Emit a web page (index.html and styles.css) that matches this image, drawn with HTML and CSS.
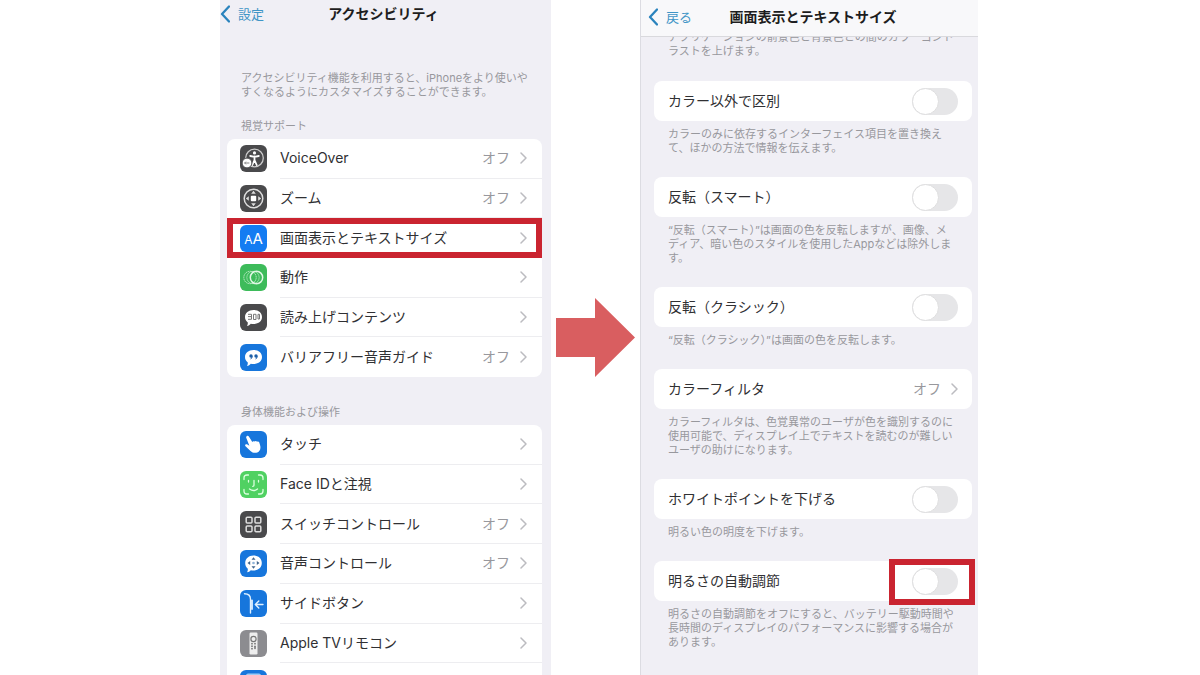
FILE: index.html
```html
<!DOCTYPE html>
<html lang="ja">
<head>
<meta charset="utf-8">
<meta name="viewport" content="width=device-width, initial-scale=1">
<title>アクセシビリティ</title>
<link rel="stylesheet" href="styles.css">
</head>
<body>
<svg class="defs" aria-hidden="true">
  <symbol id="chevron" viewBox="0 0 7 12"><path d="M1 1l5 5-5 5" fill="none" stroke="currentColor" stroke-width="1.500" stroke-linecap="round" stroke-linejoin="round"/></symbol>
  <symbol id="back" viewBox="0 0 10 18"><path d="M9 1.500L2 9l7 7.500" fill="none" stroke="currentColor" stroke-width="2.300" stroke-linecap="round" stroke-linejoin="round"/></symbol>
</svg>
<main class="guide">
  <section class="phone phone--menu">
    <header class="bar">
      <a class="back" href="#"><svg class="back__icon"><use href="#back"/></svg>設定</a>
      <h1 class="bar__title">アクセシビリティ</h1>
    </header>
    <p class="note note--intro">アクセシビリティ機能を利用すると、iPhoneをより使いや<br>すくなるようにカスタマイズすることができます。</p>

    <h2 class="heading">視覚サポート</h2>
    <nav class="list">
      <a class="row" href="#">
        <svg class="icon icon--dark" viewBox="0 0 27 27"><circle cx="14.500" cy="13" r="8.800" fill="none" stroke="#ccc" stroke-width="1.300"/><circle cx="14.500" cy="7.900" r="1.600" fill="#fff"/><path d="M10.200 11l4.300.8 4.300-.8M14.500 11.500v4M14.500 15l-2.200 5M14.500 15l2.200 5" fill="none" stroke="#fff" stroke-width="1.800" stroke-linecap="round"/><circle cx="7" cy="18" r="4.900" fill="#fff" stroke="#4a4a4c"/><path d="M4.600 18h4.800M5.900 16.700L4.600 18l1.300 1.300" fill="none" stroke="#888" stroke-width="1"/></svg>
        <span class="row__body"><span class="row__label">VoiceOver</span><span class="row__value">オフ</span><svg class="chevron"><use href="#chevron"/></svg></span>
      </a>
      <a class="row" href="#">
        <svg class="icon icon--dark" viewBox="0 0 27 27"><circle cx="13.500" cy="13.500" r="9.300" fill="none" stroke="#ddd" stroke-width="1.500"/><rect x="10.800" y="10.800" width="5.400" height="5.400" rx="1" fill="#fff"/><path d="M13.500 5.800l2.300 3h-4.600zM13.500 21.200l2.300-3h-4.600zM5.800 13.500l3-2.300v4.600zM21.200 13.500l-3-2.300v4.600z" fill="#ddd"/></svg>
        <span class="row__body"><span class="row__label">ズーム</span><span class="row__value">オフ</span><svg class="chevron"><use href="#chevron"/></svg></span>
      </a>
      <a class="row row--marked" href="#">
        <span class="icon icon--bright icon--letters" aria-hidden="true"><small class="icon__small">A</small>A</span>
        <span class="row__body"><span class="row__label">画面表示とテキストサイズ</span><svg class="chevron"><use href="#chevron"/></svg></span>
      </a>
      <a class="row" href="#">
        <svg class="icon icon--green" viewBox="0 0 27 27" fill="none" stroke="#dff7e4"><circle cx="10" cy="13.500" r="6.200" stroke-width=".8" stroke-dasharray="1.400 .6"/><circle cx="13" cy="13.500" r="6.200" stroke-width=".7" stroke-opacity=".7"/><circle cx="16.500" cy="13.500" r="6.200" stroke-width="1.500"/></svg>
        <span class="row__body"><span class="row__label">動作</span><svg class="chevron"><use href="#chevron"/></svg></span>
      </a>
      <a class="row" href="#">
        <svg class="icon icon--dark" viewBox="0 0 27 27"><path d="M13.500 6c5 0 8.500 2.900 8.500 7s-3.500 7-8.500 7c-1 0-1.900-.1-2.700-.3-1 1.300-2.200 2-3.800 2.300.7-1 .9-2 .8-3.600C6 17.200 5 15.300 5 13c0-4.100 3.500-7 8.500-7z" fill="#fff"/><path d="M8 10.300h3.500M8 12.600h3M8 15.300h3.500v-5M13.500 15.500v-5.200h2.500v5.200zM18 10.300h1.500v4.700H18z" fill="none" stroke="#777" stroke-width="1"/></svg>
        <span class="row__body"><span class="row__label">読み上げコンテンツ</span><svg class="chevron"><use href="#chevron"/></svg></span>
      </a>
      <a class="row" href="#">
        <svg class="icon icon--blue" viewBox="0 0 27 27"><path d="M13.500 6c5 0 8.500 2.900 8.500 7s-3.500 7-8.500 7c-1 0-1.900-.1-2.700-.3-1 1.300-2.200 2-3.800 2.300.7-1 .9-2 .8-3.600C6 17.200 5 15.300 5 13c0-4.100 3.500-7 8.500-7z" fill="#fff"/><g fill="#1c5fa8"><circle cx="11" cy="12" r="1.700"/><circle cx="16" cy="12" r="1.700"/><path d="M12.700 12q0 2.600-2 3.600l-.4-.7q1.200-.8 1.200-2.200zM17.700 12q0 2.600-2 3.600l-.4-.7q1.200-.8 1.200-2.200z"/></g></svg>
        <span class="row__body"><span class="row__label">バリアフリー音声ガイド</span><span class="row__value">オフ</span><svg class="chevron"><use href="#chevron"/></svg></span>
      </a>
    </nav>

    <h2 class="heading heading--next">身体機能および操作</h2>
    <nav class="list list--long">
      <a class="row" href="#">
        <svg class="icon icon--blue" viewBox="0 0 27 27"><path d="M7 5c.8-.4 1.600 0 2 .7l3.300 5.300c.4-1 1.600-1.100 2.300-.4.700-.8 1.900-.7 2.400.1.900-.6 2-.2 2.300.7l1 3.600c.6 3.200-.6 5.600-3 6.400-2.700.9-5 .2-6.800-1.500l-5-4.600c-.6-.6-.5-1.400 0-1.800.6-.4 1.300-.3 1.900.1l2 1.100L6.300 6.900C5.900 6.100 6.300 5.300 7 5z" fill="#fff"/></svg>
        <span class="row__body"><span class="row__label">タッチ</span><svg class="chevron"><use href="#chevron"/></svg></span>
      </a>
      <a class="row" href="#">
        <svg class="icon icon--lime" viewBox="0 0 27 27" fill="none" stroke="#dcffdf" stroke-width="1.300" stroke-linecap="round"><path d="M4 8.500V7q0-3 3-3h1.500M18.500 4H20q3 0 3 3v1.500M23 18.500V20q0 3-3 3h-1.500M8.500 23H7q-3 0-3-3v-1.500M8.500 9.500v1.500M18.500 9.500v1.500M14 9.500v4.800q0 1-1.300 1M9.500 18q4 3 8 0"/></svg>
        <span class="row__body"><span class="row__label">Face IDと注視</span><svg class="chevron"><use href="#chevron"/></svg></span>
      </a>
      <a class="row" href="#">
        <svg class="icon icon--dark" viewBox="0 0 27 27" fill="none" stroke="#ddd" stroke-width="1.500"><rect x="6.200" y="6.200" width="5.800" height="5.800" rx="1"/><rect x="15" y="6.200" width="5.800" height="5.800" rx="1"/><rect x="6.200" y="15" width="5.800" height="5.800" rx="1"/><rect x="15" y="15" width="5.800" height="5.800" rx="1"/></svg>
        <span class="row__body"><span class="row__label">スイッチコントロール</span><span class="row__value">オフ</span><svg class="chevron"><use href="#chevron"/></svg></span>
      </a>
      <a class="row" href="#">
        <svg class="icon icon--blue" viewBox="0 0 27 27"><path d="M13.500 5.500c4.900 0 8.300 3.200 8.300 7.500s-3.400 7.500-8.300 7.500c-1 0-1.900-.1-2.700-.3-1 1.200-2.200 1.800-3.800 2 .7-1 .9-2 .8-3.500-1.700-1.400-2.600-3.400-2.600-5.700 0-4.300 3.400-7.500 8.300-7.500z" fill="#fff"/><path d="M13.500 7.200l2 2.600h-4zM13.500 18.800l2-2.600h-4zM7.500 13l2.700-2v4zM19.500 13l-2.700-2v4z" fill="#41658c"/><circle cx="13.500" cy="13" r="1.300" fill="#8fb4da"/></svg>
        <span class="row__body"><span class="row__label">音声コントロール</span><span class="row__value">オフ</span><svg class="chevron"><use href="#chevron"/></svg></span>
      </a>
      <a class="row" href="#">
        <svg class="icon icon--blue" viewBox="0 0 27 27" fill="none" stroke="#dff0ff" stroke-width="1.400" stroke-linecap="round" stroke-linejoin="round"><path d="M4.500 3.800c4 0 6 1.700 6 5.500V23"/><path d="M12 10.500v8.500" stroke-width="1.800"/><path d="M23 14.500h-7.500M18.800 11l-3.500 3.500 3.500 3.500"/></svg>
        <span class="row__body"><span class="row__label">サイドボタン</span><svg class="chevron"><use href="#chevron"/></svg></span>
      </a>
      <a class="row" href="#">
        <svg class="icon icon--gray" viewBox="0 0 27 27"><rect x="9.500" y="2.500" width="8" height="22" rx="1.200" fill="#eee"/><circle cx="13.500" cy="9" r="2.600" fill="none" stroke="#777" stroke-width="1.200"/><g fill="#777"><circle cx="12" cy="13.700" r=".9"/><circle cx="15" cy="13.700" r=".9"/><circle cx="12" cy="16.200" r=".9"/><rect x="14.200" y="15.400" width="1.600" height="3.800" rx=".8"/><circle cx="12" cy="18.700" r=".9"/></g></svg>
        <span class="row__body"><span class="row__label">Apple TVリモコン</span><svg class="chevron"><use href="#chevron"/></svg></span>
      </a>
      <div class="row">
        <svg class="icon icon--blue" viewBox="0 0 27 27"><rect x="6" y="3.500" width="15" height="10" rx="2" fill="#9ccbf5"/></svg>
      </div>
    </nav>
  </section>

  <svg class="arrow" viewBox="0 0 79 79" aria-hidden="true"><path d="M0 20h39V0l40 39.500L39 79V59H0z" fill="#d95e60"/></svg>

  <section class="phone phone--detail">
    <header class="bar bar--lined">
      <a class="back" href="#"><svg class="back__icon"><use href="#back"/></svg>戻る</a>
      <h1 class="bar__title">画面表示とテキストサイズ</h1>
    </header>
    <p class="note note--scrolled">アプリケーションの前景色と背景色との間のカラーコント<br>ラストを上げます。</p>

    <div class="card"><label for="shape">カラー以外で区別</label><input class="switch" id="shape" type="checkbox" role="switch"></div>
    <p class="note">カラーのみに依存するインターフェイス項目を置き換え<br>て、ほかの方法で情報を伝えます。</p>

    <div class="card"><label for="smart">反転（スマート）</label><input class="switch" id="smart" type="checkbox" role="switch"></div>
    <p class="note">“反転（スマート）”は画面の色を反転しますが、画像、メ<br>ディア、暗い色のスタイルを使用したAppなどは除外しま<br>す。</p>

    <div class="card"><label for="classic">反転（クラシック）</label><input class="switch" id="classic" type="checkbox" role="switch"></div>
    <p class="note">“反転（クラシック）”は画面の色を反転します。</p>

    <a class="card" href="#"><span class="row__label">カラーフィルタ</span><span class="row__value">オフ</span><svg class="chevron"><use href="#chevron"/></svg></a>
    <p class="note">カラーフィルタは、色覚異常のユーザが色を識別するのに<br>使用可能で、ディスプレイ上でテキストを読むのが難しい<br>ユーザの助けになります。</p>

    <div class="card"><label for="white">ホワイトポイントを下げる</label><input class="switch" id="white" type="checkbox" role="switch"></div>
    <p class="note">明るい色の明度を下げます。</p>

    <div class="card card--marked"><label for="auto">明るさの自動調節</label><input class="switch" id="auto" type="checkbox" role="switch"></div>
    <p class="note">明るさの自動調節をオフにすると、バッテリー駆動時間や<br>長時間のディスプレイのパフォーマンスに影響する場合が<br>あります。</p>
  </section>
</main>
</body>
</html>
```
FILE: styles.css
```css
:root {
  --panel: #f0eff5;
  --ink: #303033;
  --muted: #98989d;
  --link: #3f95c6;
  --mark: #ca2430;
}

*, *::before, *::after { box-sizing: border-box; }

body {
  margin: 0;
  height: 100vh;
  overflow: hidden;
  background: #fff;
  color: var(--ink);
  font-family: Inter, "Noto Sans CJK JP", sans-serif;
  font-size: 14px;
  line-height: 20px;
}

h1, h2, p { margin: 0; }
a { color: inherit; text-decoration: none; }
.defs { position: absolute; width: 0; height: 0; }

.guide {
  display: flex;
  justify-content: center;
  gap: 5px;
  height: 100%;
  padding-right: 2px;
}

.phone { background: var(--panel); overflow: hidden; }
.phone--menu { flex: 0 1 331px; padding: 0 9px 0 7px; }
.phone--detail { flex: 0 1 338px; padding: 0 6px 0 13px; border-left: 1px solid #dcdce2; }
.arrow { flex: none; align-self: center; width: 79px; height: 79px; }

.bar {
  display: grid;
  grid-template-columns: 1fr auto 1fr;
  align-items: center;
  height: 28px;
  margin: 0 -9px 0 -7px;
  padding-right: 4px;
}
.bar--lined {
  position: relative;
  z-index: 1;
  height: 37px;
  margin: 0 -6px 0 -13px;
  padding: 0 0 2px 7px;
  background: #f8f8fa;
  border-bottom: 1px solid #d9d9dd;
}
.bar__title { font-size: 14px; font-weight: 700; line-height: 20px; color: #1d1d20; }
.back { display: flex; align-items: center; gap: 8px; color: var(--link); font-size: 13px; }
.back__icon { width: 10px; height: 18px; color: #2a83bd; }

.note {
  padding: 6px 0 22px 14px;
  color: var(--muted);
  font-size: 11px;
  line-height: 14px;
  white-space: nowrap;
}
.note--intro { padding: 43px 0 20px 14px; }
.note--scrolled { margin-top: -7px; padding: 0 0 23px 14px; }

.heading {
  padding: 0 0 6px 14px;
  color: var(--muted);
  font-size: 11px;
  font-weight: 400;
  line-height: 14px;
}
.heading--next { padding-top: 28px; }

.list {
  display: grid;
  grid-auto-rows: 1fr;
  min-height: 238px;
  background: #fff;
  border-radius: 8px;
}
.list--long { min-height: 278px; }

.row { position: relative; display: flex; align-items: center; gap: 13px; padding-left: 13px; }
.row__body {
  flex: 1;
  align-self: stretch;
  display: flex;
  align-items: center;
  gap: 10px;
  padding-right: 15px;
  border-bottom: 1px solid #ededf0;
}
.row:last-child .row__body { border-bottom: 0; }
.row__label { flex: 1; white-space: nowrap; }
.row__value { color: var(--muted); }
.chevron { flex: none; width: 7px; height: 12px; color: #bcbcc0; }

.row--marked::after {
  content: "";
  position: absolute;
  inset: 0;
  border: 6px solid var(--mark);
}

.icon { flex: none; width: 27px; height: 27px; border-radius: 6px; }
.icon--dark { background: #4a4a4c; }
.icon--blue { background: #1776dc; }
.icon--bright { background: #147cf2; }
.icon--green { background: #3dbb5a; }
.icon--lime { background: #50d162; }
.icon--gray { background: #8c8c90; }
.icon--letters {
  display: flex;
  align-items: baseline;
  justify-content: center;
  color: #fff;
  font-size: 15px;
  line-height: 27px;
}
.icon__small { font-size: 12px; }

.card {
  position: relative;
  display: flex;
  align-items: center;
  justify-content: space-between;
  gap: 10px;
  min-height: 40px;
  padding: 0 14px;
  background: #fff;
  border-radius: 8px;
}

.switch {
  appearance: none;
  display: flex;
  width: 46px;
  height: 27px;
  margin: 0;
  border-radius: 14px;
  background: #e6e6e8;
}
.switch::before {
  content: "";
  width: 27px;
  height: 27px;
  border: 1px solid #dededf;
  border-radius: 50%;
  background: #fff;
}
.switch:checked { justify-content: flex-end; background: #50d162; }

.card--marked::after {
  content: "";
  position: absolute;
  top: -2px;
  right: -3px;
  width: 86px;
  height: 46px;
  border: 6px solid var(--mark);
  pointer-events: none;
}
```
